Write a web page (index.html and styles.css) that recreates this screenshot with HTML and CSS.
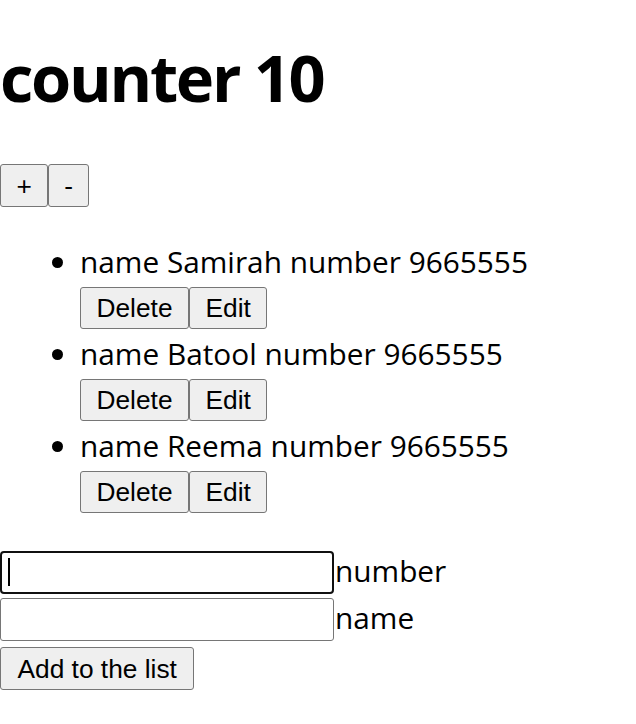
FILE: index.html
```html
<!DOCTYPE html>
<html>
<head>
<meta charset="utf-8">
<link rel="stylesheet" href="styles.css">
</head>
<body>
<h1 class="title">counter 10</h1>
<div class="counter-controls">
  <button class="btn btn-lg">+</button><button class="btn btn-lg">-</button>
</div>
<ul class="people">
  <li class="person">
    <div class="person-text">name Samirah number 9665555</div>
    <div class="person-actions"><button class="btn">Delete</button><button class="btn">Edit</button></div>
  </li>
  <li class="person">
    <div class="person-text">name Batool number 9665555</div>
    <div class="person-actions"><button class="btn">Delete</button><button class="btn">Edit</button></div>
  </li>
  <li class="person">
    <div class="person-text">name Reema number 9665555</div>
    <div class="person-actions"><button class="btn">Delete</button><button class="btn">Edit</button></div>
  </li>
</ul>
<form class="add-form">
  <div class="field-row"><span class="field field-focused"><input class="text-input" type="text"></span><span class="field-label">number</span></div>
  <div class="field-row"><span class="field"><input class="text-input" type="text"></span><span class="field-label">name</span></div>
  <div class="submit-row"><button class="btn btn-lg btn-submit" type="button">Add to the list</button></div>
</form>
</body>
</html>
```
FILE: styles.css
```css
html, body {
  margin: 0;
  padding: 0;
  background: #ffffff;
  color: #000000;
}
body {
  font-family: "Open Sans", "Noto Sans", sans-serif;
  font-size: 29.8px;
}
.title {
  margin: 0;
  padding-top: 37px;
  font-size: 65px;
  letter-spacing: -2.3px;
  line-height: 80px;
  font-weight: 700;
}
.counter-controls {
  margin-top: 47px;
  display: flex;
}
.btn {
  font-family: "Liberation Sans", Arial, sans-serif;
  font-size: 26.3px;
  color: #000;
  background: #efefef;
  border: 1px solid #767676;
  border-radius: 3px;
  padding: 0 15.5px;
  height: 42px;
  line-height: 40px;
  margin: 0;
}
.btn-lg {
  height: 43px;
}
.counter-controls .btn + .btn {
  padding: 0 15px;
}
.btn-submit {
  padding: 0 16.5px;
}
.people {
  margin: 30px 0 0 0;
  padding: 0 0 0 80px;
  list-style: disc;
}
.person-text {
  height: 50px;
  line-height: 50px;
}
.person-actions {
  display: flex;
  height: 42px;
}
.add-form {
  margin-top: 38px;
  display: flex;
  flex-direction: column;
}
.field-row {
  display: flex;
  align-items: center;
  height: 43px;
  margin-bottom: 4px;
}
.field-row + .field-row {
  margin-bottom: 6px;
}
.field {
  position: relative;
  display: block;
  width: 334px;
  height: 43px;
}
.text-input {
  box-sizing: border-box;
  width: 334px;
  height: 43px;
  margin: 0;
  border: 1px solid #767676;
  border-radius: 3px;
  background: #fff;
  font-size: 26px;
  display: block;
}
.field-focused .text-input {
  border: 2px solid #101010;
  border-radius: 4px;
}
.field-focused::after {
  content: "";
  position: absolute;
  left: 8px;
  top: 7px;
  width: 2px;
  height: 28px;
  background: #000;
}
.field-label {
  margin-left: 1px;
  margin-bottom: 5px;
  line-height: 43px;
}
.submit-row {
  display: flex;
}
```
